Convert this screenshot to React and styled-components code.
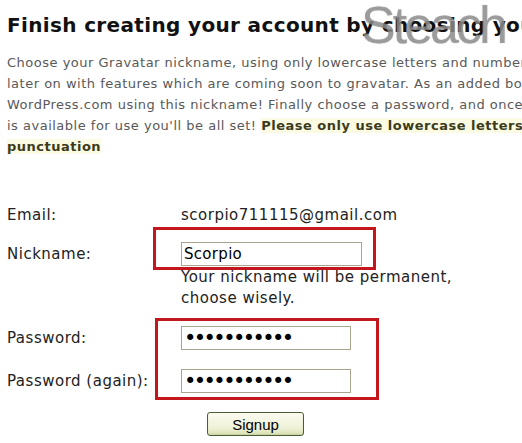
import React from 'react'
import styled, { createGlobalStyle } from 'styled-components'

const GlobalStyle = createGlobalStyle`
  html, body {
    margin: 0;
    padding: 0;
    background: #fff;
    overflow: hidden;
  }
`

const introLines = [
  'Choose your Gravatar nickname, using only lowercase letters and numbers. This will be your username',
  "later on with features which are coming soon to gravatar. As an added bonus you'll also get a blog on",
  "WordPress.com using this nickname! Finally choose a password, and once we've verified that the nickname",
]

const App = () => {
  return (
    <Page>
      <GlobalStyle />
      <Watermark>Steach</Watermark>
      <Title>Finish creating your account by choosing your nickname</Title>
      <Intro>
        {introLines.map((line) => (
          <Line key={line}>{line}</Line>
        ))}
        <Line>
          is available for use you'll be all set!{' '}
          <Notice>Please only use lowercase letters and numbers, no spaces or</Notice>
        </Line>
        <Line>
          <Notice>punctuation</Notice>
        </Line>
      </Intro>

      <Form onSubmit={(e) => e.preventDefault()}>
        <Row>
          <Label>Email:</Label>
          <Value>scorpio711115@gmail.com</Value>
        </Row>
        <Row $align='baseline'>
          <Label>Nickname:</Label>
          <Marked $shift={28} $pad='12px 11px 1px 25px'>
            <Field type='text' defaultValue='Scorpio' $width={181} />
          </Marked>
        </Row>
        <Hint>
          Your nickname will be permanent,
          <br />
          choose wisely.
        </Hint>
        <Row $gap={9}>
          <LabelStack>
            <Label>Password:</Label>
            <Label>Password (again):</Label>
          </LabelStack>
          <Marked $shift={26} $pad='5px 25px 4px 23px' $stack>
            <Field type='password' defaultValue='scorpio7111' $width={170} $secret />
            <Field type='password' defaultValue='scorpio7111' $width={170} $secret />
          </Marked>
        </Row>
        <Submit type='submit'>Signup</Submit>
      </Form>
    </Page>
  )
}

export default App

const Page = styled.div`
  position: relative;
  width: 522px;
  height: 443px;
  overflow: hidden;
  padding: 0 0 0 7px;
  box-sizing: border-box;
`
const Watermark = styled.div`
  position: absolute;
  top: -1px;
  left: 361px;
  font-family: 'Liberation Sans', Arial, sans-serif;
  font-size: 52px;
  line-height: 52px;
  letter-spacing: -3px;
  color: rgba(150, 150, 150, 0.68);
  text-shadow: 0 0 1px rgba(90, 90, 90, 0.55);
  pointer-events: none;
  z-index: 2;
`
const Title = styled.h1`
  margin: 13px 0 0 0;
  font-family: 'DejaVu Sans', Verdana, sans-serif;
  font-size: 20px;
  font-weight: 700;
  line-height: 24px;
  letter-spacing: 0.35px;
  color: #111;
  white-space: nowrap;
`
const Intro = styled.div`
  margin-top: 15px;
  font-family: 'DejaVu Sans', Verdana, sans-serif;
  font-size: 13px;
  line-height: 21px;
  letter-spacing: 0.5px;
  color: #595959;
`
const Line = styled.div`
  white-space: nowrap;
`
const Notice = styled.strong`
  font-weight: 700;
  letter-spacing: 0.5px;
  color: #3b3b1c;
  background: #fbfbe4;
`
const Form = styled.form`
  margin-top: 46px;
  display: flex;
  flex-direction: column;
  font-family: 'DejaVu Sans', Verdana, sans-serif;
  font-size: 15px;
  letter-spacing: 0.5px;
  color: #222;
`
const Row = styled.div`
  display: flex;
  align-items: ${(p) => p.$align || 'flex-start'};
  margin-top: ${(p) => p.$gap || 0}px;
`
const Label = styled.div`
  width: 174px;
  flex-shrink: 0;
  line-height: 24px;
  white-space: nowrap;
`
const LabelStack = styled.div`
  display: flex;
  flex-direction: column;
  gap: 19px;
  padding-top: 8px;
`
const Value = styled.div`
  line-height: 24px;
`
const Marked = styled.div`
  margin-left: -${(p) => p.$shift}px;
  padding: ${(p) => p.$pad};
  border: 3px solid #c3161d;
  display: flex;
  flex-direction: column;
  gap: ${(p) => (p.$stack ? '19px' : '0')};
`
const Field = styled.input`
  box-sizing: border-box;
  width: ${(p) => p.$width}px;
  height: 24px;
  margin: 0;
  padding: 0 2px;
  border: 1px solid #aaa58e;
  border-radius: 0;
  outline: none;
  font-family: 'DejaVu Sans', Verdana, sans-serif;
  font-size: ${(p) => (p.$secret ? '21px' : '15px')};
  letter-spacing: ${(p) => (p.$secret ? '-2.6px' : '0.3px')};
  color: #000;
  background: #fff;
`
const Hint = styled.div`
  margin: -3px 0 0 174px;
  line-height: 21px;
  color: #222;
`
const Submit = styled.button`
  align-self: flex-start;
  margin: 12px 0 0 200px;
  width: 97px;
  height: 24px;
  padding: 0;
  border: 1px solid #4b5d36;
  border-radius: 3px;
  background: linear-gradient(#fbfbf0, #eef1d6 70%, #d7dfb0);
  box-shadow: inset 0 -1px 1px #c9d3a0;
  font-family: 'Liberation Sans', Arial, sans-serif;
  font-size: 15px;
  letter-spacing: 0;
  color: #000;
  cursor: pointer;
`
